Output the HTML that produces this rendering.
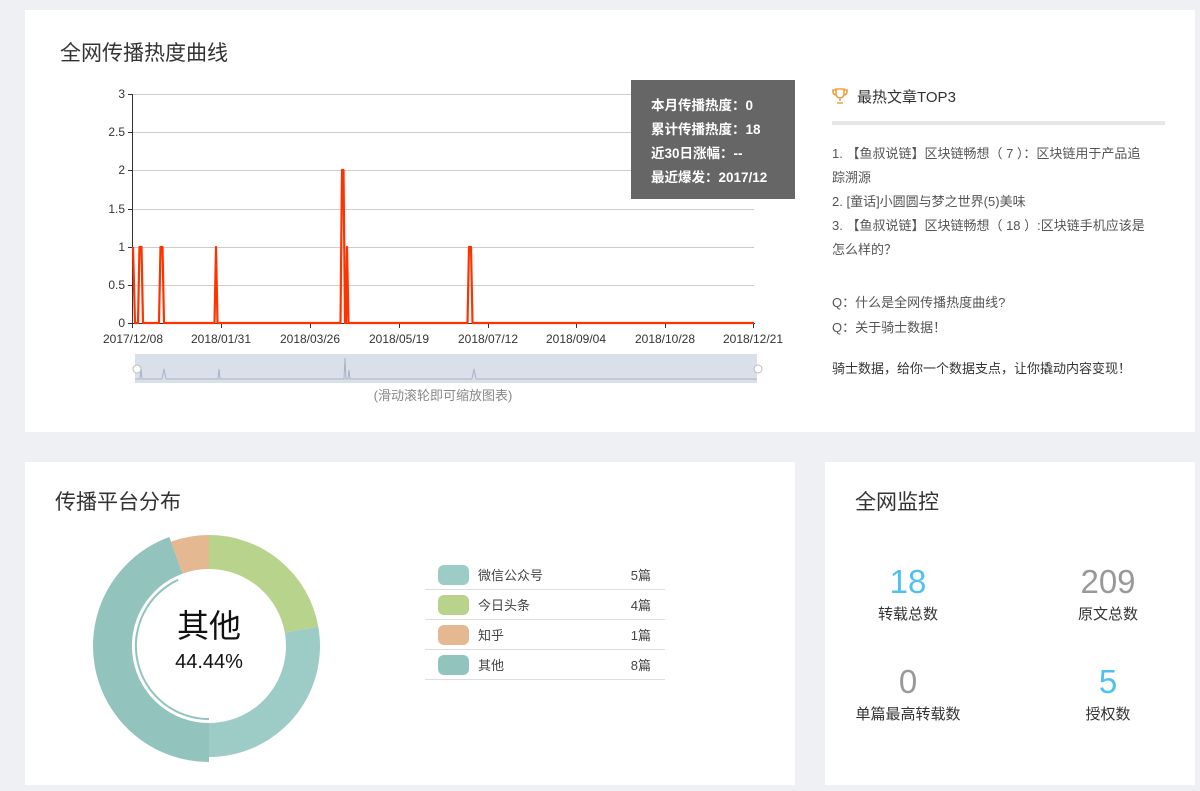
<!DOCTYPE html>
<html><head><meta charset="utf-8">
<style>
*{margin:0;padding:0;box-sizing:border-box}
body{width:1200px;height:791px;background:#eef0f3;font-family:"Liberation Sans","Noto Sans CJK SC",sans-serif;position:relative;overflow:hidden;color:#555}
.card{position:absolute;background:#fff}
.t{position:absolute;font-size:21px;color:#333}
.abs{position:absolute}
</style></head><body>
<div class="card" style="left:25px;top:10px;width:1170px;height:422px"></div>
<div class="card" style="left:25px;top:462px;width:770px;height:323px"></div>
<div class="card" style="left:825px;top:462px;width:370px;height:323px"></div>

<div class="t" style="left:60px;top:37px">全网传播热度曲线</div>

<svg class="abs" style="left:0;top:0" width="800" height="420">
<g stroke="#ccc" stroke-width="1">
<line x1="133" y1="94.5" x2="754" y2="94.5"/><line x1="133" y1="132.5" x2="754" y2="132.5"/>
<line x1="133" y1="170.5" x2="754" y2="170.5"/><line x1="133" y1="209.5" x2="754" y2="209.5"/>
<line x1="133" y1="247.5" x2="754" y2="247.5"/><line x1="133" y1="285.5" x2="754" y2="285.5"/>
</g>
<line x1="132.5" y1="94" x2="132.5" y2="324" stroke="#333"/>
<line x1="132" y1="323.5" x2="755" y2="323.5" stroke="#333"/>
<g stroke="#333"><line x1="128" y1="94.5" x2="133" y2="94.5"/><line x1="128" y1="132.5" x2="133" y2="132.5"/><line x1="128" y1="170.5" x2="133" y2="170.5"/><line x1="128" y1="209.5" x2="133" y2="209.5"/><line x1="128" y1="247.5" x2="133" y2="247.5"/><line x1="128" y1="285.5" x2="133" y2="285.5"/><line x1="128" y1="323.5" x2="133" y2="323.5"/>
<line x1="132.5" y1="323" x2="132.5" y2="328"/><line x1="221.5" y1="323" x2="221.5" y2="328"/><line x1="310.5" y1="323" x2="310.5" y2="328"/><line x1="399.5" y1="323" x2="399.5" y2="328"/><line x1="488.5" y1="323" x2="488.5" y2="328"/><line x1="576.5" y1="323" x2="576.5" y2="328"/><line x1="665.5" y1="323" x2="665.5" y2="328"/><line x1="753.5" y1="323" x2="753.5" y2="328"/></g>
<g font-size="12" fill="#333" text-anchor="end" font-family="Liberation Sans,sans-serif">
<text x="125" y="98">3</text><text x="125" y="136">2.5</text><text x="125" y="174">2</text><text x="125" y="213">1.5</text><text x="125" y="251">1</text><text x="125" y="289">0.5</text><text x="125" y="327">0</text></g>
<g font-size="12" fill="#333" text-anchor="middle" font-family="Liberation Sans,sans-serif">
<text x="133" y="343">2017/12/08</text><text x="221" y="343">2018/01/31</text><text x="310" y="343">2018/03/26</text><text x="399" y="343">2018/05/19</text><text x="488" y="343">2018/07/12</text><text x="576" y="343">2018/09/04</text><text x="665" y="343">2018/10/28</text><text x="753" y="343">2018/12/21</text></g>
<path d="M133 247 L135 323 L138 323 L139.5 247 L141.5 247 L143 323 L159 323 L160.5 247 L162.5 247 L164 323 L214.5 323 L216 247 L217.5 323 L340.5 323 L342 170 L343.5 170 L345 323 L346 323 L347 247 L348.5 323 L467.5 323 L469 247 L471 247 L472.5 323 L754 323" fill="none" stroke="#ff3300" stroke-width="2.2" stroke-linejoin="round"/>
<rect x="135" y="354" width="622" height="29" fill="#dae0e9"/>
<path d="M135 379 L140 379 L141 369 L142 379 L162 379 L164 369 L166 379 L218 379 L219 369 L220 379 L344 379 L345 358 L346 379 L348 379 L349 370 L350 379 L472 379 L474 369 L476 379 L757 379" fill="none" stroke="#aab3c2" stroke-width="1"/>
<circle cx="137" cy="369" r="4" fill="#fff" stroke="#bbb"/><circle cx="758" cy="369" r="4" fill="#fff" stroke="#bbb"/>
<text x="443" y="400" font-size="13" fill="#888" text-anchor="middle" font-family="Liberation Sans,Noto Sans CJK SC,sans-serif">(滑动滚轮即可缩放图表)</text>
</svg>

<div class="abs" style="left:631px;top:80px;width:164px;height:119px;background:#666;color:#fff;font-size:13.5px;font-weight:bold;padding:14px 0 0 20px;line-height:24px">本月传播热度：0<br>累计传播热度：18<br>近30日涨幅：--<br>最近爆发：2017/12</div>

<svg class="abs" style="left:832px;top:87px" width="16" height="18" viewBox="0 0 16 18"><path d="M4 2h8v5a4 4 0 0 1-8 0z M4 3H1v2a3 3 0 0 0 3 3 M12 3h3v2a3 3 0 0 1-3 3 M8 11v3 M5 16h6" fill="none" stroke="#f0a040" stroke-width="1.6"/></svg>
<div class="abs" style="left:857px;top:86px;font-size:15px;color:#333">最热文章TOP3</div>
<div class="abs" style="left:832px;top:121px;width:333px;height:4px;background:#e6e6e6"></div>
<div class="abs" style="left:832px;top:142px;width:360px;font-size:13px;line-height:24px;color:#555;white-space:nowrap">1. 【鱼叔说链】区块链畅想（ 7 ）：区块链用于产品追<br>踪溯源<br>2. [童话]小圆圆与梦之世界(5)美味<br>3. 【鱼叔说链】区块链畅想（ 18 ）:区块链手机应该是<br>怎么样的？</div>
<div class="abs" style="left:832px;top:290px;font-size:13px;line-height:25px;color:#555">Q：什么是全网传播热度曲线?<br>Q：关于骑士数据！</div>
<div class="abs" style="left:832px;top:358px;font-size:13px;color:#333">骑士数据，给你一个数据支点，让你撬动内容变现！</div>

<div class="t" style="left:55px;top:486px">传播平台分布</div>
<svg class="abs" style="left:0;top:462px" width="800" height="329">
<g transform="translate(0,-462)">
<path d="M209 535 A111 111 0 0 1 318.3 626.7 L284.8 632.6 A77 77 0 0 0 209 569 Z" fill="#b8d38c"/>
<path d="M318.3 626.7 A111 111 0 0 1 209 757 L209 723 A77 77 0 0 0 284.8 632.6 Z" fill="#9dcbc5"/>
<path d="M209 762 A116 116 0 0 1 169.3 537 L182.7 573.6 A77 77 0 0 0 209 723 Z" fill="#93c3bd"/>
<path d="M171 541.7 A111 111 0 0 1 209 535 L209 569 A77 77 0 0 0 182.7 573.6 Z" fill="#e4b891"/>
<path d="M209 719 A73 73 0 0 1 178.1 579.8" fill="none" stroke="#93c3bd" stroke-width="2"/>
<text x="209" y="637" font-size="32" fill="#111" text-anchor="middle" font-family="Liberation Sans,Noto Sans CJK SC,sans-serif">其他</text>
<text x="209" y="668" font-size="20" fill="#111" text-anchor="middle" font-family="Liberation Sans,sans-serif">44.44%</text>
<g font-size="13" fill="#444" font-family="Liberation Sans,Noto Sans CJK SC,sans-serif">
<rect x="438" y="565" width="31" height="20" rx="6" fill="#9dcbc5"/><text x="478" y="580">微信公众号</text><text x="651" y="580" text-anchor="end">5篇</text>
<line x1="425" y1="589.5" x2="665" y2="589.5" stroke="#ddd"/>
<rect x="438" y="595" width="31" height="20" rx="6" fill="#b8d38c"/><text x="478" y="610">今日头条</text><text x="651" y="610" text-anchor="end">4篇</text>
<line x1="425" y1="619.5" x2="665" y2="619.5" stroke="#ddd"/>
<rect x="438" y="625" width="31" height="20" rx="6" fill="#e4b891"/><text x="478" y="640">知乎</text><text x="651" y="640" text-anchor="end">1篇</text>
<line x1="425" y1="649.5" x2="665" y2="649.5" stroke="#ddd"/>
<rect x="438" y="655" width="31" height="20" rx="6" fill="#93c3bd"/><text x="478" y="670">其他</text><text x="651" y="670" text-anchor="end">8篇</text>
<line x1="425" y1="679.5" x2="665" y2="679.5" stroke="#ddd"/>
</g></g></svg>

<div class="t" style="left:855px;top:486px">全网监控</div>
<div class="abs" style="left:858px;top:563px;width:100px;text-align:center;font-size:33px;color:#4fc1f0">18</div>
<div class="abs" style="left:858px;top:603px;width:100px;text-align:center;font-size:15px;color:#333">转载总数</div>
<div class="abs" style="left:1058px;top:563px;width:100px;text-align:center;font-size:33px;color:#999">209</div>
<div class="abs" style="left:1058px;top:603px;width:100px;text-align:center;font-size:15px;color:#333">原文总数</div>
<div class="abs" style="left:838px;top:663px;width:140px;text-align:center;font-size:33px;color:#999">0</div>
<div class="abs" style="left:838px;top:703px;width:140px;text-align:center;font-size:15px;color:#333">单篇最高转载数</div>
<div class="abs" style="left:1058px;top:663px;width:100px;text-align:center;font-size:33px;color:#4fc1f0">5</div>
<div class="abs" style="left:1058px;top:703px;width:100px;text-align:center;font-size:15px;color:#333">授权数</div>
</body></html>
